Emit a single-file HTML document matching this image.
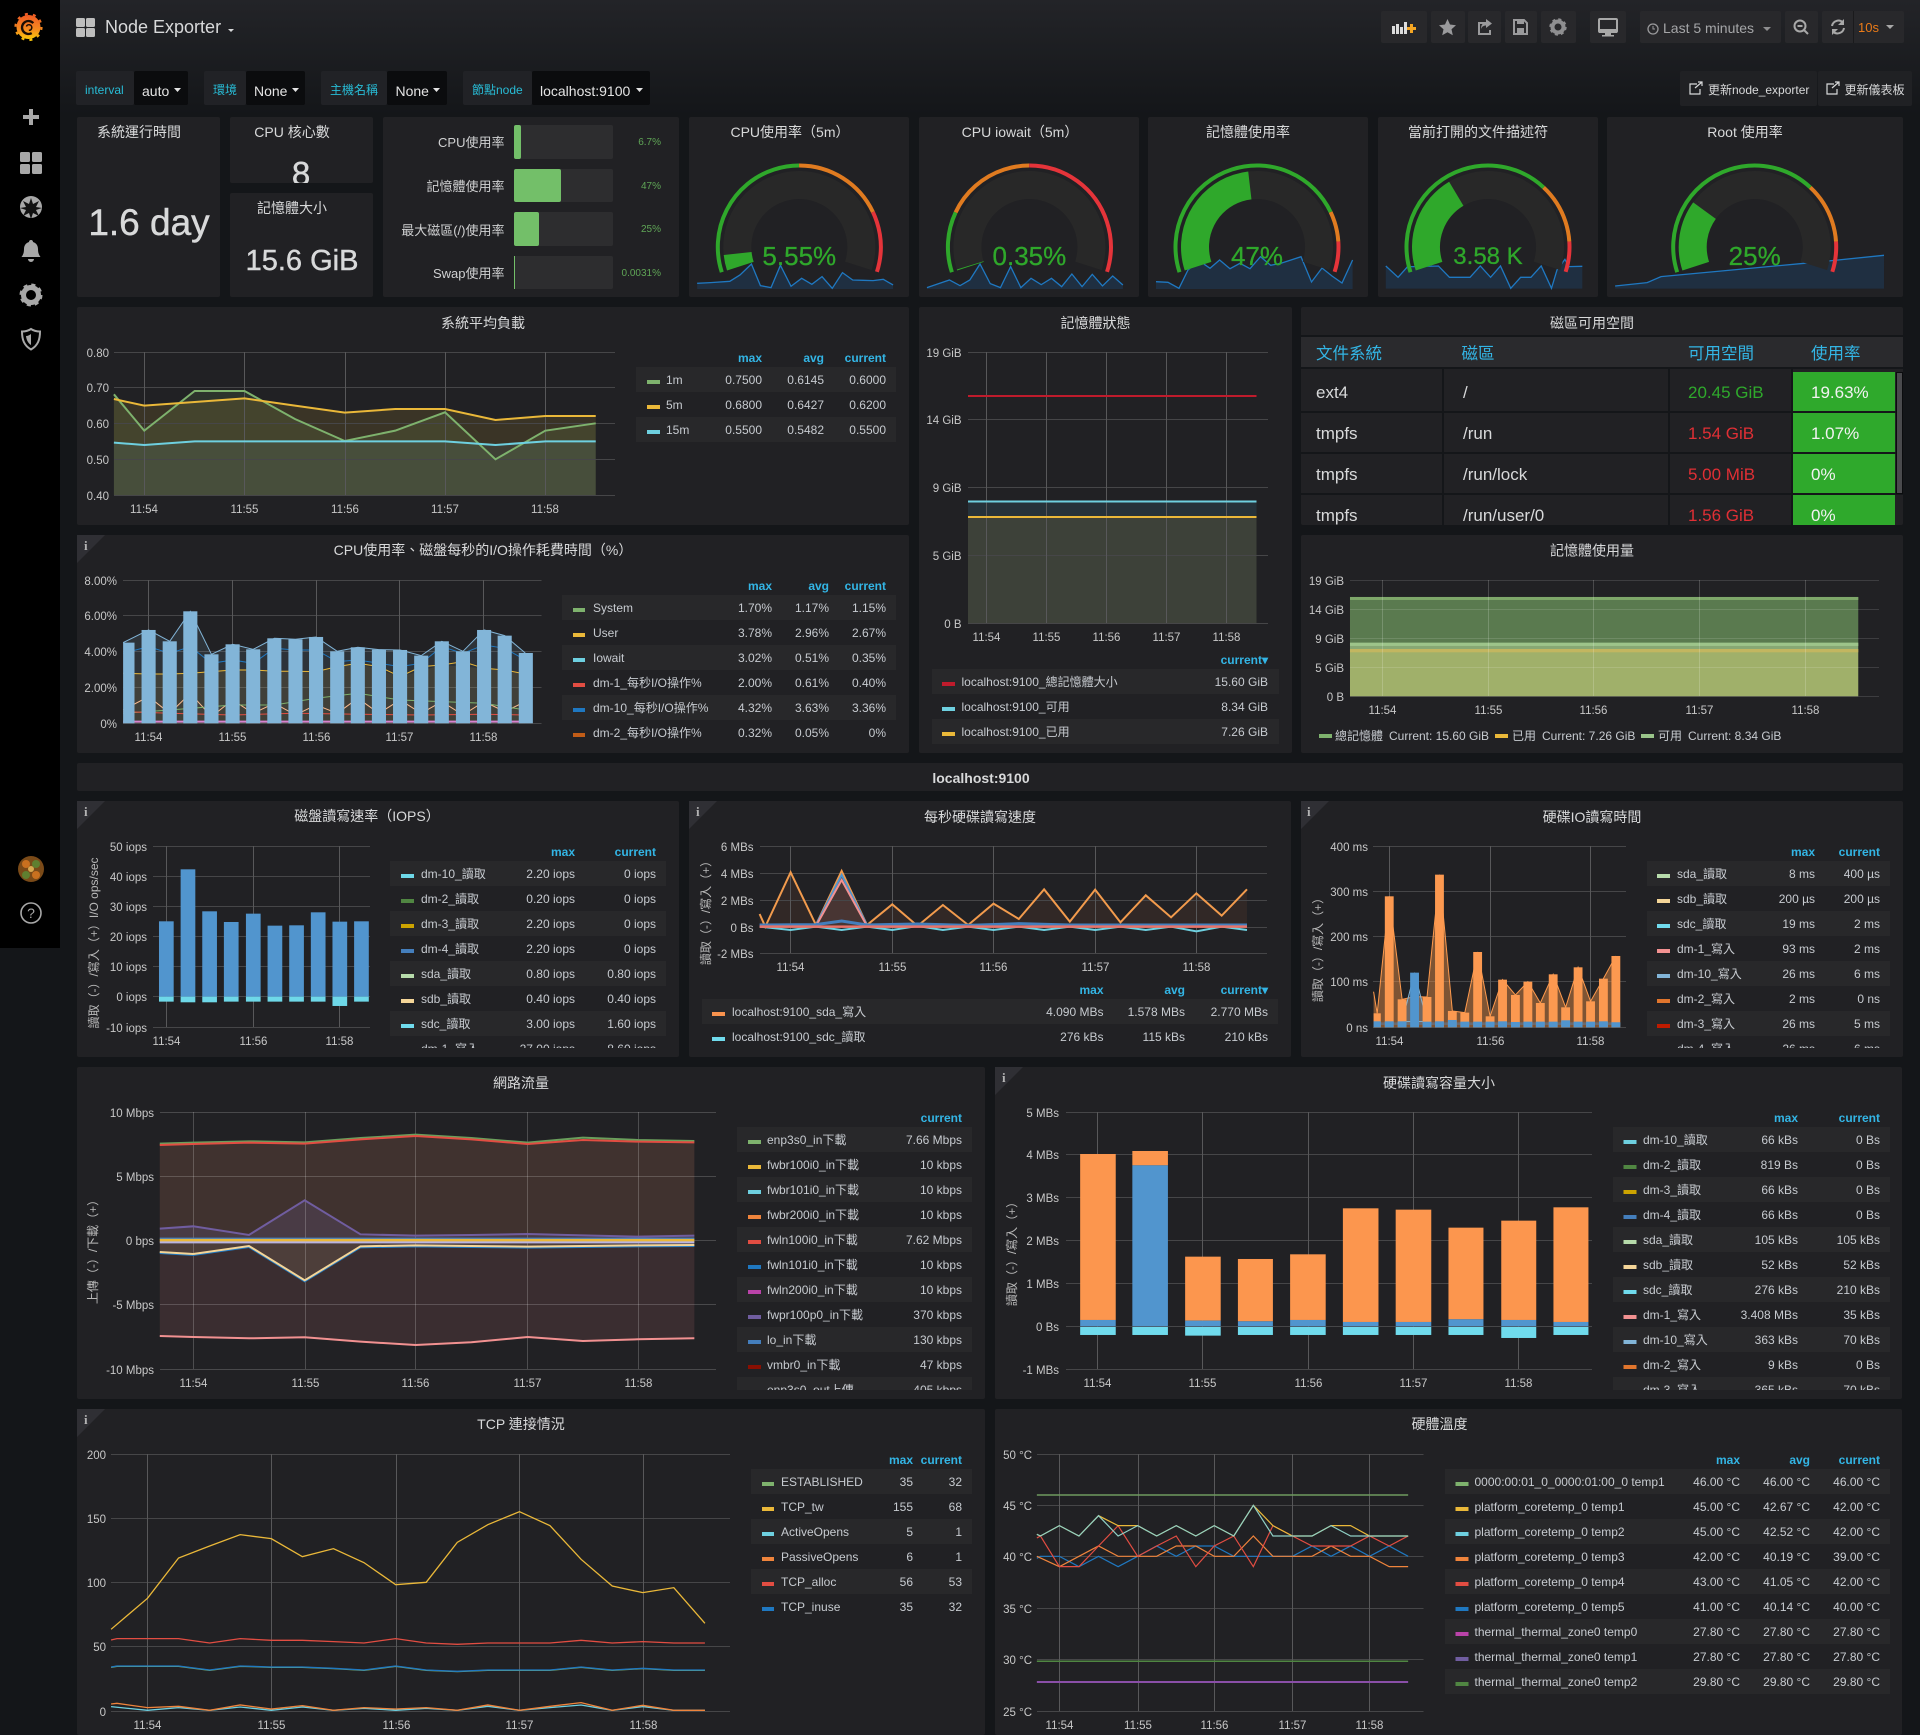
<!DOCTYPE html>
<html lang="zh-Hant"><head><meta charset="utf-8"><title>Node Exporter</title>
<style>
html,body{margin:0;padding:0;background:#141619}
svg{display:block}
text{font-family:"Liberation Sans","Noto Sans CJK TC",sans-serif;fill:#d8d9da;font-size:12px}
.t{font-size:14px;text-anchor:middle}
.a{font-size:11.5px;text-anchor:end;fill:#c8c8c8}
.x{font-size:11.5px;text-anchor:middle;fill:#c8c8c8}
.n{fill:#c7cbd0}
.r{text-anchor:end;fill:#c7cbd0}
.h{text-anchor:end;fill:#33b5e5;font-weight:bold}
.y{text-anchor:middle;fill:#b8b8b8}
.p{fill:#212124}
.st{fill:#28282a}
.g{stroke:#464648;stroke-width:1;fill:none;shape-rendering:crispEdges}
.v{stroke:#58585a;stroke-width:1;fill:none;shape-rendering:crispEdges}
.z polyline,.z path,.z line{vector-effect:non-scaling-stroke;fill:none}
.i{font-family:"Liberation Serif",serif;font-size:13px;font-weight:bold;fill:#b4b4b4}
.tab{font-size:17px}
.th{font-size:16.5px;fill:#33b5e5}
.var{fill:#28bcd6;font-size:12px}
.val{font-size:14px;fill:#e4e4e4}
.btn{fill:#28282b}
.ic{fill:#a8a8a8}
.gv{fill:#2fa82b;font-size:26px;text-anchor:middle;stroke:#2fa82b;stroke-width:.3}
.bl{font-size:13px;text-anchor:end;fill:#d0d1d2}
.bv{font-size:10px;text-anchor:end;fill:#5fa556}
.big{text-anchor:middle;stroke:#d8d9da;stroke-width:.45}
</style></head><body>
<svg xmlns="http://www.w3.org/2000/svg" width="1920" height="1735" viewBox="0 0 1920 1735">
<defs>
<linearGradient id="bg" x1="0" y1="0" x2="0" y2="1"><stop offset="0" stop-color="#232428"/><stop offset="1" stop-color="#141619"/></linearGradient>
<linearGradient id="lg" x1="0" y1="0" x2="0" y2="1"><stop offset="0" stop-color="#ef5b25"/><stop offset=".6" stop-color="#f58a1f"/><stop offset="1" stop-color="#fbc70a"/></linearGradient>
<clipPath id="c8"><rect x="230" y="117" width="143" height="66"/></clipPath>
<clipPath id="cdisk"><rect x="1301" y="307" width="602" height="218"/></clipPath>
<clipPath id="c1"><rect x="380" y="850" width="295" height="198"/></clipPath>
<clipPath id="c2"><rect x="1640" y="850" width="260" height="198"/></clipPath>
<clipPath id="c3"><rect x="730" y="1115" width="250" height="275"/></clipPath>
<clipPath id="c4"><rect x="1605" y="1115" width="295" height="275"/></clipPath>
</defs>
<rect width="1920" height="1735" fill="#141619"/>
<rect width="1920" height="115" fill="url(#bg)"/>

<!-- sidebar -->
<rect width="60" height="948" fill="#000"/>
<circle cx="28.5" cy="27" r="12" fill="url(#lg)"/>
<circle cx="28.5" cy="27" r="13" fill="none" stroke="url(#lg)" stroke-width="2.2" stroke-dasharray="3 5.170"/>
<circle cx="28.5" cy="27.500" r="6.500" fill="none" stroke="#1a0d05" stroke-width="2.300" stroke-dasharray="29 12" transform="rotate(60 28.500 27.500)"/>
<circle cx="29" cy="27.500" r="2.800" fill="none" stroke="#1a0d05" stroke-width="1.500" stroke-dasharray="12 6" transform="rotate(200 29 27.500)"/>
<path class="ic" d="M29 109h4v6h6v4h-6v6h-4v-6h-6v-4h6z"/>
<g class="ic"><rect x="20" y="152" width="10" height="10" rx="1.5"/><rect x="32" y="152" width="10" height="10" rx="1.5"/><rect x="20" y="164" width="10" height="10" rx="1.5"/><rect x="32" y="164" width="10" height="10" rx="1.5"/></g>
<circle cx="31" cy="207" r="11" class="ic"/>
<path fill="#111" d="M31 198l2 6 6-3-3 6 6 1-6 2 3 6-6-3-2 6-2-6-6 3 3-6-6-2 6-1-3-6 6 3z"/>
<path class="ic" d="M31 240c-1.4 0-2 1-2 2-3.5 1-5 4-5 7 0 4-1 6-2.500 8h19c-1.500-2-2.500-4-2.500-8 0-3-1.500-6-5-7 0-1-.6-2-2-2zm-3 19a3 3 0 0 0 6 0z"/>
<circle cx="31" cy="295" r="7.500" fill="none" stroke="#a8a8a8" stroke-width="5"/>
<circle cx="31" cy="295" r="10" fill="none" stroke="#a8a8a8" stroke-width="3" stroke-dasharray="4 3.850"/>
<path d="M31 329c3 2 6 2.500 9 2.500 0 8-2 14-9 18-7-4-9-10-9-18 3 0 6-.5 9-2.500z" fill="none" stroke="#a8a8a8" stroke-width="2"/>
<path class="ic" d="M31 334v11c-3-2-4.500-5-5-9 2 0 3.500-1 5-2z"/>
<circle cx="31" cy="869" r="13" fill="#7a4a18"/>
<circle cx="26" cy="864" r="4" fill="#c9701f"/><circle cx="36" cy="864" r="4" fill="#5f7f30"/><circle cx="26" cy="875" r="4" fill="#5f7f30"/><circle cx="36" cy="875" r="4" fill="#c9701f"/><circle cx="31" cy="869" r="3" fill="#d8a850"/>
<circle cx="31" cy="913" r="10" fill="none" stroke="#a8a8a8" stroke-width="1.600"/>
<text x="31" y="918" style="font-size:14px;text-anchor:middle;fill:#a8a8a8">?</text>

<!-- nav -->
<g fill="#bdbdbd"><rect x="76" y="18" width="9" height="9" rx="1.500"/><rect x="86" y="18" width="9" height="9" rx="1.500"/><rect x="76" y="28" width="9" height="9" rx="1.500"/><rect x="86" y="28" width="9" height="9" rx="1.500"/></g>
<text x="105" y="33" style="font-size:18px">Node Exporter</text>
<path d="M228 29h6l-3 3z" fill="#d8d9da"/>

<g>
<rect class="btn" x="1381" y="11" width="46" height="32" rx="2"/><rect class="btn" x="1431" y="11" width="34" height="32" rx="2"/><rect class="btn" x="1468" y="11" width="33" height="32" rx="2"/><rect class="btn" x="1505" y="11" width="32" height="32" rx="2"/><rect class="btn" x="1541" y="11" width="35" height="32" rx="2"/><rect class="btn" x="1590" y="11" width="36" height="32" rx="2"/><rect class="btn" x="1640" y="11" width="141" height="32" rx="2"/><rect class="btn" x="1785" y="11" width="33" height="32" rx="2"/><rect class="btn" x="1822" y="11" width="82" height="32" rx="2"/>
<rect x="1853" y="11" width="1" height="32" fill="#1a1a1c"/>
</g>
<g fill="#dcdcdc"><rect x="1392" y="26" width="3" height="8"/><rect x="1396" y="24" width="3" height="10"/><rect x="1400" y="27" width="3" height="7"/><rect x="1404" y="22" width="3" height="12"/></g>
<path d="M1410 24h3v3h3v3h-3v3h-3v-3h-3v-3h3z" fill="#f5a623"/>
<path fill="#9a9a9c" d="M1447.500 19l2.500 5.500 6 .7-4.500 4 1.300 6-5.300-3-5.300 3 1.300-6-4.500-4 6-.7z"/>
<path fill="none" stroke="#9a9a9c" stroke-width="2" d="M1486 23h-7v11h11v-4"/><path fill="#9a9a9c" d="M1486 19l6 4.500-6 4.500v-2.500c-2.500 0-4 1-5 3.500 0-4 2-6.500 5-7z"/>
<path fill="none" stroke="#9a9a9c" stroke-width="2" d="M1514 20h10l3 3v11h-13z"/><rect x="1517" y="20" width="7" height="4" fill="#9a9a9c"/><rect x="1517" y="28" width="7" height="6" fill="#9a9a9c"/>
<circle cx="1558" cy="27" r="5.500" fill="none" stroke="#8e8e90" stroke-width="4"/><circle cx="1558" cy="27" r="7.500" fill="none" stroke="#8e8e90" stroke-width="2.400" stroke-dasharray="3 2.890"/>
<rect x="1599" y="19" width="18" height="13" rx="1" fill="none" stroke="#a8a8a8" stroke-width="2"/><path d="M1599 29h18v4h-18zM1605 33h6v2h3v1.500h-12v-1.500h3z" fill="#a8a8a8"/>
<circle cx="1653" cy="29" r="5" fill="none" stroke="#9a9a9c" stroke-width="1.300"/><path d="M1653 26v3h2" fill="none" stroke="#9a9a9c"/>
<text x="1663" y="33" style="font-size:14px;fill:#a5a6a8">Last 5 minutes</text>
<path d="M1763 27h8l-4 4z" fill="#8e8e90"/>
<circle cx="1800" cy="26" r="5.500" fill="none" stroke="#a8a8a8" stroke-width="2"/><path d="M1797.500 26h5M1804 30l4 4" stroke="#a8a8a8" stroke-width="2" fill="none"/>
<path d="M1832 26a6.500 6.500 0 0 1 11-3.500M1844 28a6.500 6.500 0 0 1-11 3.500" fill="none" stroke="#a8a8a8" stroke-width="2"/><path d="M1844 19v6h-6zM1832 35v-6h6z" fill="#a8a8a8"/>
<text x="1858" y="32" style="font-size:13px;fill:#eb7b18">10s</text>
<path d="M1886 25h8l-4 4z" fill="#a8a8a8"/>

<!-- template vars -->
<g>
<rect x="76" y="71" width="58" height="34" rx="2" fill="#212226"/><rect x="134" y="71" width="54" height="34" rx="2" fill="#0b0c0e"/>
<text class="var" x="85" y="94">interval</text><text class="val" x="142" y="96">auto</text><path d="M174 88h7l-3.500 4z" fill="#e4e4e4"/>
<rect x="204" y="71" width="42" height="34" rx="2" fill="#212226"/><rect x="246" y="71" width="59" height="34" rx="2" fill="#0b0c0e"/>
<text class="var" x="213" y="94">環境</text><text class="val" x="254" y="96">None</text><path d="M292 88h7l-3.500 4z" fill="#e4e4e4"/>
<rect x="321" y="71" width="66" height="34" rx="2" fill="#212226"/><rect x="387" y="71" width="60" height="34" rx="2" fill="#0b0c0e"/>
<text class="var" x="330" y="94">主機名稱</text><text class="val" x="395.500" y="96">None</text><path d="M433 88h7l-3.500 4z" fill="#e4e4e4"/>
<rect x="463" y="71" width="69" height="34" rx="2" fill="#212226"/><rect x="532" y="71" width="118" height="34" rx="2" fill="#0b0c0e"/>
<text class="var" x="472" y="94">節點node</text><text class="val" x="540" y="96">localhost:9100</text><path d="M636 88h7l-3.500 4z" fill="#e4e4e4"/>
<rect x="1680" y="71" width="137" height="35" rx="2" fill="#202124"/><rect x="1818" y="71" width="94" height="35" rx="2" fill="#202124"/>
<path d="M1697 84h-7v10h10v-5M1695 88l7-6M1698 82h4v4" fill="none" stroke="#d8d9da" stroke-width="1.200"/>
<text x="1708" y="94" style="font-size:12px">更新node_exporter</text>
<path d="M1834 84h-7v10h10v-5M1832 88l7-6M1835 82h4v4" fill="none" stroke="#d8d9da" stroke-width="1.200"/>
<text x="1844.500" y="94" style="font-size:12px">更新儀表板</text>
</g>

<!-- panels -->
<g class="p">
<rect x="77" y="117" width="143" height="180" rx="2"/><rect x="230" y="117" width="143" height="66" rx="2"/><rect x="230" y="193" width="143" height="104" rx="2"/><rect x="383" y="117" width="296" height="180" rx="2"/>
<rect x="689" y="117" width="220" height="180" rx="2"/><rect x="919" y="117" width="220" height="180" rx="2"/><rect x="1148" y="117" width="220" height="180" rx="2"/><rect x="1378" y="117" width="220" height="180" rx="2"/><rect x="1607" y="117" width="296" height="180" rx="2"/>
<rect x="77" y="307" width="832" height="218" rx="2"/><rect x="77" y="535" width="832" height="218" rx="2"/><rect x="919" y="307" width="373" height="446" rx="2"/><rect x="1301" y="307" width="602" height="218" rx="2"/><rect x="1301" y="535" width="602" height="218" rx="2"/>
<rect x="77" y="763" width="1826" height="28" rx="2"/>
<rect x="77" y="801" width="602" height="256" rx="2"/><rect x="689" y="801" width="602" height="256" rx="2"/><rect x="1301" y="801" width="602" height="256" rx="2"/>
<rect x="77" y="1067" width="908" height="332" rx="2"/><rect x="995" y="1067" width="907" height="332" rx="2"/>
<rect x="77" y="1409" width="908" height="326" rx="2"/><rect x="995" y="1409" width="907" height="326" rx="2"/>
</g>
<!-- info corners -->
<g fill="#2f2f34"><path d="M77 535h28l-28 28z"/><path d="M77 801h28l-28 28z"/><path d="M689 801h28l-28 28z"/><path d="M1301 801h28l-28 28z"/><path d="M995 1067h28l-28 28z"/><path d="M77 1409h28l-28 28z"/></g>
<text class="i" x="84" y="550">i</text><text class="i" x="84" y="816">i</text><text class="i" x="696" y="816">i</text><text class="i" x="1307" y="816">i</text><text class="i" x="1002" y="1082">i</text><text class="i" x="84" y="1424">i</text>

<!-- stats -->
<text class="t" x="139" y="137">系統運行時間</text>
<text class="big" x="149" y="235" style="font-size:37px">1.6 day</text>
<text class="t" x="292" y="137">CPU 核心數</text>
<text class="big" x="301" y="185" clip-path="url(#c8)" style="font-size:33px">8</text>
<text class="t" x="292" y="213">記憶體大小</text>
<text class="big" x="302" y="270" style="font-size:29px">15.6 GiB</text>

<!-- bar gauge -->
<g fill="#2d2d2f"><rect x="514" y="125" width="99" height="34" rx="2"/><rect x="514" y="169" width="99" height="33" rx="2"/><rect x="514" y="212" width="99" height="34" rx="2"/><rect x="514" y="256" width="99" height="33" rx="2"/></g>
<g fill="#73bf69"><rect x="514" y="125" width="7" height="34" rx="2"/><rect x="514" y="169" width="47" height="33" rx="2"/><rect x="514" y="212" width="25" height="34" rx="2"/><rect x="514" y="256" width="1" height="33"/></g>
<text class="bl" x="504.500" y="147">CPU使用率</text><text class="bl" x="504.500" y="191">記憶體使用率</text><text class="bl" x="504.500" y="235">最大磁區(/)使用率</text><text class="bl" x="504.500" y="278">Swap使用率</text>
<text class="bv" x="661" y="145">6.7%</text><text class="bv" x="661" y="189">47%</text><text class="bv" x="661" y="232">25%</text><text class="bv" x="661" y="276">0.0031%</text>

<!-- gauges -->
<text class="t" x="790" y="137">CPU使用率（5m）</text>
<text class="t" x="1020" y="137">CPU iowait（5m）</text>
<text class="t" x="1248" y="137">記憶體使用率</text>
<text class="t" x="1478" y="137">當前打開的文件描述符</text>
<text class="t" x="1745" y="137">Root 使用率</text>
<g class="z">
<g transform="translate(680,110) scale(.4082,.3333)">
<path d="M42 520L75 518 122 514 147 495 175 462 197 527 223 533 246 466 272 529 298 505 323 523 348 500 373 535 398 488 423 510 448 511 473 512 498 508 522 525V537H42Z" style="fill:#1f2f41;stroke:none"/>
<polyline points="42,520 75,518 122,514 147,495 175,462 197,527 223,533 246,466 272,529 298,505 323,523 348,500 373,535 398,488 423,510 448,511 473,512 498,508 522,525" stroke="#1f78c1" stroke-width="1.300"/>
<path d="M605 533L660 510 686 527 710 510 735 462 760 521 785 533 810 470 835 533 860 505 885 524 910 505 935 530 960 492 985 530 1010 493 1035 528 1060 498 1085 525V537H605Z" style="fill:#1f2f41;stroke:none"/>
<polyline points="605,533 660,510 686,527 710,510 735,462 760,521 785,533 810,470 835,533 860,505 885,524 910,505 935,530 960,492 985,530 1010,493 1035,528 1060,498 1085,525" stroke="#1f78c1" stroke-width="1.300"/>
</g>
<path d="M1156 281.700L1168 282.300 1179 288.300 1188 270 1199 260.700 1210 268.300 1219.600 260 1230 268.700 1240 263.300 1250 268.700 1260.500 256.700 1270.700 265.300 1281 263.300 1291 260 1301 256.700 1311.500 282 1322 268 1332 276 1342 283 1352.600 260V289H1156Z" style="fill:#1f2f41;stroke:none"/>
<polyline points="1156,281.700 1168,282.300 1179,288.300 1188,270 1199,260.700 1210,268.300 1219.600,260 1230,268.700 1240,263.300 1250,268.700 1260.500,256.700 1270.700,265.300 1281,263.300 1291,260 1301,256.700 1311.500,282 1322,268 1332,276 1342,283 1352.600,260" stroke="#1f78c1" stroke-width="1.300"/>
<g transform="translate(1300,0) scale(.3954,.3333)">
<path d="M217 798L248 832 272 800 300 800 350 798 378 832 430 832 456 798 482 832 507 798 533 865 558 832 584 832 610 798 636 865 650 810 670 778 680 800 714 799V866H217Z" style="fill:#1f2f41;stroke:none"/>
<polyline points="217,798 248,832 272,800 300,800 350,798 378,832 430,832 456,798 482,832 507,798 533,865 558,832 584,832 610,798 636,865 650,810 670,778 680,800 714,799" stroke="#1f78c1" stroke-width="1.300"/>
<path d="M797 858L878 848 913 830 1275 790 1345 782 1477 766V866H797Z" style="fill:#1f2f41;stroke:none"/>
<polyline points="797,858 878,848 913,830 1275,790 1345,782 1477,766" stroke="#1f78c1" stroke-width="1.300"/>
</g>
</g>
<!-- gauge 1 cpu -->
<g fill="none" transform="rotate(162 799.300 247)">
<circle cx="799.300" cy="247" r="62" stroke="#282828" stroke-width="28" pathLength="360" stroke-dasharray="216 360"/>
<circle cx="799.300" cy="247" r="62" stroke="#2fa82b" stroke-width="28" pathLength="360" stroke-dasharray="12 360"/>
<circle cx="799.300" cy="247" r="81.500" stroke="#2fa82b" stroke-width="4" pathLength="360" stroke-dasharray="108 360"/>
<circle cx="799.300" cy="247" r="81.500" stroke="#e07b20" stroke-width="4" pathLength="360" stroke-dasharray="64.800 360" stroke-dashoffset="-108"/>
<circle cx="799.300" cy="247" r="81.500" stroke="#e5343a" stroke-width="4" pathLength="360" stroke-dasharray="43.200 360" stroke-dashoffset="-172.800"/>
</g>
<text class="gv" x="799.300" y="265">5.55%</text>
<!-- gauge 2 iowait -->
<g fill="none" transform="rotate(162 1029.400 247)">
<circle cx="1029.400" cy="247" r="62" stroke="#282828" stroke-width="28" pathLength="360" stroke-dasharray="216 360"/>
<circle cx="1029.400" cy="247" r="62" stroke="#2fa82b" stroke-width="28" pathLength="360" stroke-dasharray="0.800 360"/>
<circle cx="1029.400" cy="247" r="81.500" stroke="#2fa82b" stroke-width="4" pathLength="360" stroke-dasharray="43.200 360"/>
<circle cx="1029.400" cy="247" r="81.500" stroke="#e07b20" stroke-width="4" pathLength="360" stroke-dasharray="64.800 360" stroke-dashoffset="-43.200"/>
<circle cx="1029.400" cy="247" r="81.500" stroke="#e5343a" stroke-width="4" pathLength="360" stroke-dasharray="108 360" stroke-dashoffset="-108"/>
</g>
<text class="gv" x="1029.400" y="265">0.35%</text>
<!-- gauge 3 mem -->
<g fill="none" transform="rotate(162 1257 247)">
<circle cx="1257" cy="247" r="62" stroke="#282828" stroke-width="28" pathLength="360" stroke-dasharray="216 360"/>
<circle cx="1257" cy="247" r="62" stroke="#2fa82b" stroke-width="28" pathLength="360" stroke-dasharray="101.500 360"/>
<circle cx="1257" cy="247" r="81.500" stroke="#2fa82b" stroke-width="4" pathLength="360" stroke-dasharray="172.800 360"/>
<circle cx="1257" cy="247" r="81.500" stroke="#e07b20" stroke-width="4" pathLength="360" stroke-dasharray="21.600 360" stroke-dashoffset="-172.800"/>
<circle cx="1257" cy="247" r="81.500" stroke="#e5343a" stroke-width="4" pathLength="360" stroke-dasharray="21.600 360" stroke-dashoffset="-194.400"/>
</g>
<text class="gv" x="1257" y="265">47%</text>
<!-- gauge 4 fd -->
<g fill="none" transform="rotate(162 1488 247)">
<circle cx="1488" cy="247" r="62" stroke="#282828" stroke-width="28" pathLength="360" stroke-dasharray="216 360"/>
<circle cx="1488" cy="247" r="62" stroke="#2fa82b" stroke-width="28" pathLength="360" stroke-dasharray="77.300 360"/>
<circle cx="1488" cy="247" r="81.500" stroke="#2fa82b" stroke-width="4" pathLength="360" stroke-dasharray="151.200 360"/>
<circle cx="1488" cy="247" r="81.500" stroke="#e07b20" stroke-width="4" pathLength="360" stroke-dasharray="43.200 360" stroke-dashoffset="-151.200"/>
<circle cx="1488" cy="247" r="81.500" stroke="#e5343a" stroke-width="4" pathLength="360" stroke-dasharray="21.600 360" stroke-dashoffset="-194.400"/>
</g>
<text class="gv" x="1488" y="264" style="font-size:24px">3.58 K</text>
<!-- gauge 5 root -->
<g fill="none" transform="rotate(162 1754.700 247)">
<circle cx="1754.700" cy="247" r="62" stroke="#282828" stroke-width="28" pathLength="360" stroke-dasharray="216 360"/>
<circle cx="1754.700" cy="247" r="62" stroke="#2fa82b" stroke-width="28" pathLength="360" stroke-dasharray="54 360"/>
<circle cx="1754.700" cy="247" r="81.500" stroke="#2fa82b" stroke-width="4" pathLength="360" stroke-dasharray="151.200 360"/>
<circle cx="1754.700" cy="247" r="81.500" stroke="#e07b20" stroke-width="4" pathLength="360" stroke-dasharray="43.200 360" stroke-dashoffset="-151.200"/>
<circle cx="1754.700" cy="247" r="81.500" stroke="#e5343a" stroke-width="4" pathLength="360" stroke-dasharray="21.600 360" stroke-dashoffset="-194.400"/>
</g>
<text class="gv" x="1754.700" y="265">25%</text>

<!-- system load -->
<text class="t" x="483" y="328">系統平均負載</text>
<g class="z" transform="translate(70,300) scale(.542,.3333)">
<path d="M81 283L137 392 230 273 322 273 415 357 507 423 600 392 692 337 785 478 877 392 970 370V586H81Z" style="fill:#7eb26d;fill-opacity:.12"/>
<path d="M81 297L137 317 230 306 322 295 415 317 507 338 600 327 692 327 785 360 877 348 970 348V586H81Z" style="fill:#eab839;fill-opacity:.13"/>
<path d="M81 428L137 435 230 424 322 424 415 424 507 424 600 424 692 424 785 435 877 424 970 424V586H81Z" style="fill:#6ed0e0;fill-opacity:.08"/>
</g>
<path class="g" d="M114 352.500H615M114 387.500H615M114 423.500H615M114 459.500H615M114 495.500H615"/>
<path class="v" d="M144.500 352V495M244.500 352V495M345.500 352V495M445.500 352V495M545.500 352V495"/>
<g class="z" transform="translate(70,300) scale(.542,.3333)">
<polyline points="81,283 137,392 230,273 322,273 415,357 507,423 600,392 692,337 785,478 877,392 970,370" stroke="#7eb26d" stroke-width="2"/>
<polyline points="81,297 137,317 230,306 322,295 415,317 507,338 600,327 692,327 785,360 877,348 970,348" stroke="#eab839" stroke-width="2"/>
<polyline points="81,428 137,435 230,424 322,424 415,424 507,424 600,424 692,424 785,435 877,424 970,424" stroke="#6ed0e0" stroke-width="2"/>
</g>
<text class="a" x="109" y="357">0.80</text><text class="a" x="109" y="392">0.70</text><text class="a" x="109" y="428">0.60</text><text class="a" x="109" y="464">0.50</text><text class="a" x="109" y="500">0.40</text>
<text class="x" x="144" y="513">11:54</text><text class="x" x="244.500" y="513">11:55</text><text class="x" x="345" y="513">11:56</text><text class="x" x="445" y="513">11:57</text><text class="x" x="545" y="513">11:58</text>
<text class="h" x="762" y="362">max</text><text class="h" x="824" y="362">avg</text><text class="h" x="886" y="362">current</text>
<rect class="st" x="636" y="367" width="260" height="25"/><rect class="st" x="636" y="417" width="260" height="25"/>
<rect x="647" y="380" width="13" height="4" fill="#7eb26d"/><text class="n" x="666" y="384">1m</text><text class="r" x="762" y="384">0.7500</text><text class="r" x="824" y="384">0.6145</text><text class="r" x="886" y="384">0.6000</text>
<rect x="647" y="405" width="13" height="4" fill="#eab839"/><text class="n" x="666" y="409">5m</text><text class="r" x="762" y="409">0.6800</text><text class="r" x="824" y="409">0.6427</text><text class="r" x="886" y="409">0.6200</text>
<rect x="647" y="430" width="13" height="4" fill="#6ed0e0"/><text class="n" x="666" y="434">15m</text><text class="r" x="762" y="434">0.5500</text><text class="r" x="824" y="434">0.5482</text><text class="r" x="886" y="434">0.5500</text>

<!-- CPU IO -->
<text class="t" x="483" y="555">CPU使用率、磁盤每秒的I/O操作耗費時間（%）</text>
<path class="g" d="M123 580.500H541.500M123 615.500H541.500M123 651.500H541.500M123 687.500H541.500M123 723.500H541.500"/>
<path class="v" d="M148.500 580V723M232.500 580V723M316.500 580V723M399.500 580V723M483.500 580V723"/>
<g class="z" transform="translate(70,300) scale(.542,.3333)">
<path d="M98 1028L145 990 184 1024 222 934 261 1063 300 1033 338 1048 377 1015 416 1018 454 1011 493 1054 531 1042 570 1049 609 1050 648 1067 686 1024 725 1054 764 990 802 1007 840 1059V1270H98Z" style="fill:#82b5d8;fill-opacity:.12"/>
<path d="M98 1120L184 1122 222 1120 300 1110 377 1114 454 1115 531 1090 609 1130 686 1095 764 1105 840 1122V1270H98Z" style="fill:#eab839;fill-opacity:.1"/>
<polyline points="98,1028 145,990 184,1024 222,934 261,1063 300,1033 338,1048 377,1015 416,1018 454,1011 493,1054 531,1042 570,1049 609,1050 648,1067 686,1024 725,1054 764,990 802,1007 840,1059" stroke="#82b5d8" stroke-width="1"/>
<polyline points="98,1060 145,1040 184,1060 222,1040 261,1090 300,1080 338,1090 377,1045 416,1050 454,1050 493,1085 531,1080 570,1090 609,1100 648,1090 686,1040 725,1060 764,1035 802,1045 840,1080" stroke="#1f78c1" stroke-width="1"/>
<polyline points="98,1120 145,1122 184,1122 222,1120 261,1115 300,1110 338,1110 377,1114 416,1114 454,1115 493,1100 531,1090 570,1100 609,1130 648,1100 686,1095 725,1085 764,1105 802,1110 840,1122" stroke="#eab839" stroke-width="1"/>
<polyline points="98,1230 145,1190 184,1240 222,1180 261,1250 300,1200 338,1240 377,1210 416,1245 454,1215 493,1240 531,1195 570,1240 609,1200 648,1240 686,1205 725,1245 764,1205 802,1235 840,1205" stroke="#f9ba8f" stroke-width="1"/>
<polyline points="98,1240 184,1230 300,1215 377,1215 454,1195 531,1180 609,1200 686,1205 764,1210 840,1230" stroke="#7eb26d" stroke-width="1"/>
<polyline points="98,1235 184,1240 300,1245 416,1240 531,1243 648,1245 764,1243 840,1245" stroke="#e24d42" stroke-width="1"/>
<polyline points="98,1265 300,1265 531,1265 840,1265" stroke="#d683ce" stroke-width="2"/>
<g fill="#82b5d8"><rect x="98" y="1028" width="21" height="242"/><rect x="132" y="990" width="26" height="280"/><rect x="171" y="1024" width="26" height="246"/><rect x="209" y="934" width="26" height="336"/><rect x="248" y="1063" width="26" height="207"/><rect x="287" y="1033" width="26" height="237"/><rect x="325" y="1048" width="26" height="222"/><rect x="364" y="1015" width="26" height="255"/><rect x="403" y="1018" width="26" height="252"/><rect x="441" y="1011" width="26" height="259"/><rect x="480" y="1054" width="26" height="216"/><rect x="518" y="1042" width="26" height="228"/><rect x="557" y="1049" width="26" height="221"/><rect x="596" y="1050" width="26" height="220"/><rect x="635" y="1067" width="26" height="203"/><rect x="673" y="1024" width="26" height="246"/><rect x="712" y="1054" width="26" height="216"/><rect x="751" y="990" width="26" height="280"/><rect x="789" y="1007" width="26" height="263"/><rect x="828" y="1059" width="26" height="211"/></g>
</g>
<text class="a" x="117" y="585">8.00%</text><text class="a" x="117" y="620">6.00%</text><text class="a" x="117" y="656">4.00%</text><text class="a" x="117" y="692">2.00%</text><text class="a" x="117" y="728">0%</text>
<text class="x" x="148.500" y="741">11:54</text><text class="x" x="232.500" y="741">11:55</text><text class="x" x="316.500" y="741">11:56</text><text class="x" x="399.500" y="741">11:57</text><text class="x" x="483.500" y="741">11:58</text>
<text class="h" x="772" y="590">max</text><text class="h" x="829" y="590">avg</text><text class="h" x="886" y="590">current</text>
<rect class="st" x="562" y="595" width="334" height="25"/><rect class="st" x="562" y="645" width="334" height="25"/><rect class="st" x="562" y="695" width="334" height="25"/>
<rect x="573" y="608" width="12" height="4" fill="#7eb26d"/><text class="n" x="593" y="612">System</text><text class="r" x="772" y="612">1.70%</text><text class="r" x="829" y="612">1.17%</text><text class="r" x="886" y="612">1.15%</text>
<rect x="573" y="633" width="12" height="4" fill="#eab839"/><text class="n" x="593" y="637">User</text><text class="r" x="772" y="637">3.78%</text><text class="r" x="829" y="637">2.96%</text><text class="r" x="886" y="637">2.67%</text>
<rect x="573" y="658" width="12" height="4" fill="#6ed0e0"/><text class="n" x="593" y="662">Iowait</text><text class="r" x="772" y="662">3.02%</text><text class="r" x="829" y="662">0.51%</text><text class="r" x="886" y="662">0.35%</text>
<rect x="573" y="683" width="12" height="4" fill="#e24d42"/><text class="n" x="593" y="687">dm-1_每秒I/O操作%</text><text class="r" x="772" y="687">2.00%</text><text class="r" x="829" y="687">0.61%</text><text class="r" x="886" y="687">0.40%</text>
<rect x="573" y="708" width="12" height="4" fill="#1f78c1"/><text class="n" x="593" y="712">dm-10_每秒I/O操作%</text><text class="r" x="772" y="712">4.32%</text><text class="r" x="829" y="712">3.63%</text><text class="r" x="886" y="712">3.36%</text>
<rect x="573" y="733" width="12" height="4" fill="#c15c17"/><text class="n" x="593" y="737">dm-2_每秒I/O操作%</text><text class="r" x="772" y="737">0.32%</text><text class="r" x="829" y="737">0.05%</text><text class="r" x="886" y="737">0%</text>

<!-- mem status -->
<text class="t" x="1095.500" y="328">記憶體狀態</text>
<rect x="968" y="501.500" width="288.500" height="15.500" fill="#26323a"/>
<rect x="968" y="517" width="288.500" height="106" fill="#3d4139"/>
<path class="g" d="M968 352.500H1268M968 419.500H1268M968 487.500H1268M968 555.500H1268M968 623.500H1268"/>
<path class="v" d="M986.500 352V623M1046.500 352V623M1106.500 352V623M1166.500 352V623M1226.500 352V623"/>
<path d="M968 396H1256.500" stroke="#bf1b2c" stroke-width="2"/>
<path d="M968 501.500H1256.500" stroke="#6ed0e0" stroke-width="2"/>
<path d="M968 517H1256.500" stroke="#eab839" stroke-width="2"/>
<text class="a" x="961.500" y="357">19 GiB</text><text class="a" x="961.500" y="424">14 GiB</text><text class="a" x="961.500" y="492">9 GiB</text><text class="a" x="961.500" y="560">5 GiB</text><text class="a" x="961.500" y="628">0 B</text>
<text class="x" x="986.500" y="641">11:54</text><text class="x" x="1046.500" y="641">11:55</text><text class="x" x="1106.500" y="641">11:56</text><text class="x" x="1166.500" y="641">11:57</text><text class="x" x="1226.500" y="641">11:58</text>
<text class="h" x="1268" y="664">current▾</text>
<rect class="st" x="932" y="669" width="347" height="25"/><rect class="st" x="932" y="719" width="347" height="25"/>
<rect x="942" y="682" width="13" height="4" fill="#bf1b2c"/><text class="n" x="961.500" y="686">localhost:9100_總記憶體大小</text><text class="r" x="1268" y="686">15.60 GiB</text>
<rect x="942" y="707" width="13" height="4" fill="#6ed0e0"/><text class="n" x="961.500" y="711">localhost:9100_可用</text><text class="r" x="1268" y="711">8.34 GiB</text>
<rect x="942" y="732" width="13" height="4" fill="#eab839"/><text class="n" x="961.500" y="736">localhost:9100_已用</text><text class="r" x="1268" y="736">7.26 GiB</text>

<!-- disk table -->
<text class="t" x="1592" y="328">磁區可用空間</text>
<rect x="1301" y="335" width="602" height="2" fill="#141619"/>
<rect x="1301" y="337" width="602" height="30" fill="#2a2a2d"/>
<rect x="1301" y="367" width="602" height="2" fill="#141619"/>
<text class="th" x="1316" y="359">文件系統</text><text class="th" x="1461.500" y="359">磁區</text><text class="th" x="1688" y="359">可用空間</text><text class="th" x="1811" y="359">使用率</text>
<g clip-path="url(#cdisk)">
<g fill="#141619"><rect x="1301" y="411" width="602" height="2"/><rect x="1301" y="452" width="602" height="2"/><rect x="1301" y="493" width="602" height="2"/><rect x="1442" y="369" width="2" height="160"/><rect x="1668" y="369" width="2" height="160"/><rect x="1791" y="369" width="2" height="160"/></g>
<g fill="#2fa92c"><rect x="1793" y="372" width="102" height="39"/><rect x="1793" y="413" width="102" height="39"/><rect x="1793" y="454" width="102" height="39"/><rect x="1793" y="495" width="102" height="30"/></g>
<rect x="1896" y="372" width="7" height="122" fill="#0b0c0e"/><rect x="1897" y="373" width="5" height="120" fill="#4a4a4d"/>
<text class="tab" x="1316" y="398">ext4</text><text class="tab" x="1463" y="398">/</text><text class="tab" x="1688" y="398" style="fill:#2fa92c">20.45 GiB</text><text class="tab" x="1811" y="398" style="fill:#f2f2f2">19.63%</text>
<text class="tab" x="1316" y="439">tmpfs</text><text class="tab" x="1463" y="439">/run</text><text class="tab" x="1688" y="439" style="fill:#e02f35">1.54 GiB</text><text class="tab" x="1811" y="439" style="fill:#f2f2f2">1.07%</text>
<text class="tab" x="1316" y="480">tmpfs</text><text class="tab" x="1463" y="480">/run/lock</text><text class="tab" x="1688" y="480" style="fill:#e02f35">5.00 MiB</text><text class="tab" x="1811" y="480" style="fill:#f2f2f2">0%</text>
<text class="tab" x="1316" y="521">tmpfs</text><text class="tab" x="1463" y="521">/run/user/0</text><text class="tab" x="1688" y="521" style="fill:#e02f35">1.56 GiB</text><text class="tab" x="1811" y="521" style="fill:#f2f2f2">0%</text>
</g>

<!-- mem usage -->
<text class="t" x="1592" y="555.500">記憶體使用量</text>
<g transform="translate(910,300) scale(.6442,.3333)">
<rect x="683" y="891" width="789" height="139" fill="#5a7a4f"/>
<rect x="683" y="1030" width="789" height="20" fill="#87a874"/>
<rect x="683" y="1050" width="789" height="139" fill="#a0b06a"/>
<rect x="683" y="891" width="789" height="9" fill="#7ea76a"/>
<rect x="683" y="1028" width="789" height="10" fill="#9dc48a"/>
<rect x="683" y="1047" width="789" height="10" fill="#c2b660"/>
</g>
<path d="M1350 580.500H1879M1350 609.500H1879M1350 638.500H1879M1350 667.500H1879M1350 696.500H1879" fill="none" stroke="#fff" stroke-opacity=".13" shape-rendering="crispEdges"/>
<path d="M1382.500 580V696M1488.500 580V696M1593.500 580V696M1699.500 580V696M1805.500 580V696" fill="none" stroke="#fff" stroke-opacity=".18" shape-rendering="crispEdges"/>
<text class="a" x="1344" y="585">19 GiB</text><text class="a" x="1344" y="614">14 GiB</text><text class="a" x="1344" y="643">9 GiB</text><text class="a" x="1344" y="672">5 GiB</text><text class="a" x="1344" y="701">0 B</text>
<text class="x" x="1382.500" y="714">11:54</text><text class="x" x="1488.500" y="714">11:55</text><text class="x" x="1593.500" y="714">11:56</text><text class="x" x="1699.500" y="714">11:57</text><text class="x" x="1805.500" y="714">11:58</text>
<rect x="1319" y="734" width="13" height="4" fill="#7eb26d"/><text class="n" x="1335" y="740">總記憶體</text><text class="n" x="1389" y="740">Current: 15.60 GiB</text>
<rect x="1495" y="734" width="13" height="4" fill="#eab839"/><text class="n" x="1512" y="740">已用</text><text class="n" x="1542" y="740">Current: 7.26 GiB</text>
<rect x="1641" y="734" width="13" height="4" fill="#9ac48a"/><text class="n" x="1658" y="740">可用</text><text class="n" x="1688" y="740">Current: 8.34 GiB</text>

<!-- section -->
<text x="981" y="783" style="font-size:14px;font-weight:bold;text-anchor:middle">localhost:9100</text>

<!-- IOPS -->
<text class="t" x="367" y="821">磁盤讀寫速率（IOPS）</text>
<path class="g" d="M153 846.500H370M153 876.500H370M153 906.500H370M153 936.500H370M153 966.500H370M153 996.500H370M153 1027.500H370"/>
<path class="v" d="M166.500 846V1027M253.500 846V1027M339.500 846V1027"/>
<g transform="translate(70,760) scale(.4082,.3333)">
<g fill="#5195ce"><rect x="218" y="484" width="36" height="226"/><rect x="271" y="328" width="36" height="382"/><rect x="324" y="454" width="36" height="256"/><rect x="377" y="486" width="36" height="224"/><rect x="431" y="461" width="36" height="249"/><rect x="484" y="497" width="36" height="213"/><rect x="537" y="496" width="36" height="214"/><rect x="590" y="457" width="36" height="253"/><rect x="643" y="485" width="36" height="225"/><rect x="696" y="484" width="36" height="226"/></g>
<g fill="#6ed8e8"><rect x="218" y="710" width="36" height="15"/><rect x="271" y="710" width="36" height="17"/><rect x="324" y="710" width="36" height="17"/><rect x="377" y="710" width="36" height="15"/><rect x="431" y="710" width="36" height="15"/><rect x="484" y="710" width="36" height="15"/><rect x="537" y="710" width="36" height="15"/><rect x="590" y="710" width="36" height="15"/><rect x="643" y="710" width="36" height="28"/><rect x="696" y="710" width="36" height="15"/></g>
</g>
<text class="a" x="147" y="851">50 iops</text><text class="a" x="147" y="881">40 iops</text><text class="a" x="147" y="911">30 iops</text><text class="a" x="147" y="941">20 iops</text><text class="a" x="147" y="971">10 iops</text><text class="a" x="147" y="1001">0 iops</text><text class="a" x="147" y="1032">-10 iops</text>
<text class="x" x="166.500" y="1045">11:54</text><text class="x" x="253.500" y="1045">11:56</text><text class="x" x="339.500" y="1045">11:58</text>
<text class="y" transform="translate(98,943) rotate(-90)">讀取（-）/寫入（+）I/O ops/sec</text>
<text class="h" x="575" y="856">max</text><text class="h" x="656" y="856">current</text>
<g clip-path="url(#c1)">
<rect class="st" x="390" y="861" width="276" height="25"/><rect class="st" x="390" y="911" width="276" height="25"/><rect class="st" x="390" y="961" width="276" height="25"/><rect class="st" x="390" y="1011" width="276" height="25"/>
<rect x="401" y="874" width="13" height="4" fill="#6ed8e8"/><text class="n" x="421" y="878">dm-10_讀取</text><text class="r" x="575" y="878">2.20 iops</text><text class="r" x="656" y="878">0 iops</text>
<rect x="401" y="899" width="13" height="4" fill="#508642"/><text class="n" x="421" y="903">dm-2_讀取</text><text class="r" x="575" y="903">0.20 iops</text><text class="r" x="656" y="903">0 iops</text>
<rect x="401" y="924" width="13" height="4" fill="#cca300"/><text class="n" x="421" y="928">dm-3_讀取</text><text class="r" x="575" y="928">2.20 iops</text><text class="r" x="656" y="928">0 iops</text>
<rect x="401" y="949" width="13" height="4" fill="#447ebc"/><text class="n" x="421" y="953">dm-4_讀取</text><text class="r" x="575" y="953">2.20 iops</text><text class="r" x="656" y="953">0 iops</text>
<rect x="401" y="974" width="13" height="4" fill="#b7dbab"/><text class="n" x="421" y="978">sda_讀取</text><text class="r" x="575" y="978">0.80 iops</text><text class="r" x="656" y="978">0.80 iops</text>
<rect x="401" y="999" width="13" height="4" fill="#f4d598"/><text class="n" x="421" y="1003">sdb_讀取</text><text class="r" x="575" y="1003">0.40 iops</text><text class="r" x="656" y="1003">0.40 iops</text>
<rect x="401" y="1024" width="13" height="4" fill="#70dbed"/><text class="n" x="421" y="1028">sdc_讀取</text><text class="r" x="575" y="1028">3.00 iops</text><text class="r" x="656" y="1028">1.60 iops</text>
<text class="n" x="421" y="1053">dm-1_寫入</text><text class="r" x="575" y="1053">27.00 iops</text><text class="r" x="656" y="1053">8.60 iops</text>
</g>

<!-- speed -->
<text class="t" x="980" y="822">每秒硬碟讀寫速度</text>
<g class="z" transform="translate(680,790) scale(.4082,.3333)">
<path d="M195 372L209 410 271 247 333 405 396 243 458 405 520 343 582 408 644 345 706 405 768 341 830 387 892 298 955 395 1017 299 1079 397 1141 316 1203 382 1265 310 1327 377 1389 298V410H195Z" style="fill:#ef843c;fill-opacity:.08"/>
<path d="M333 405L396 270 458 405Z" style="fill:#f29191;fill-opacity:.12"/>
</g>
<path class="g" d="M760 846.500H1267M760 873.500H1267M760 900.500H1267M760 927.500H1267M760 953.500H1267"/>
<path class="v" d="M790.500 846V953M892.500 846V953M993.500 846V953M1095.500 846V953M1196.500 846V953"/>
<g class="z" transform="translate(680,790) scale(.4082,.3333)">
<polyline points="195,410 271,420 333,410 396,420 458,410 520,420 582,408 644,420 706,410 768,420 830,410 892,420 955,410 1017,420 1079,410 1141,420 1203,410 1265,424 1327,410 1389,420" stroke="#6ed0e0" stroke-width="2"/>
<polyline points="195,372 209,410 271,247 333,405 396,243 458,405 520,343 582,408 644,345 706,405 768,341 830,387 892,298 955,395 1017,299 1079,397 1141,316 1203,382 1265,310 1327,377 1389,298" stroke="#f29b4d" stroke-width="2"/>
<polyline points="333,405 396,255 458,405" stroke="#5195ce" stroke-width="2"/>
<polyline points="333,408 396,270 458,408" stroke="#f29191" stroke-width="2"/>
<polyline points="195,405 333,404 396,393 458,405 582,402 706,406 830,401 955,405 1389,405" stroke="#447ebc" stroke-width="3"/>
<polyline points="195,410 1389,410" stroke="#e8736a" stroke-width="2.500"/>
</g>
<text class="a" x="753.500" y="851">6 MBs</text><text class="a" x="753.500" y="878">4 MBs</text><text class="a" x="753.500" y="905">2 MBs</text><text class="a" x="753.500" y="932">0 Bs</text><text class="a" x="753.500" y="958">-2 MBs</text>
<text class="x" x="790.500" y="971">11:54</text><text class="x" x="892.500" y="971">11:55</text><text class="x" x="993.500" y="971">11:56</text><text class="x" x="1095.500" y="971">11:57</text><text class="x" x="1196.500" y="971">11:58</text>
<text class="y" transform="translate(710,910) rotate(-90)">讀取（-）/寫入（+）</text>
<text class="h" x="1103.500" y="994">max</text><text class="h" x="1185" y="994">avg</text><text class="h" x="1268" y="994">current▾</text>
<rect class="st" x="702" y="999" width="576" height="25"/>
<rect x="712" y="1012" width="13" height="4" fill="#f9934e"/><text class="n" x="732" y="1016">localhost:9100_sda_寫入</text><text class="r" x="1103.500" y="1016">4.090 MBs</text><text class="r" x="1185" y="1016">1.578 MBs</text><text class="r" x="1268" y="1016">2.770 MBs</text>
<rect x="712" y="1037" width="13" height="4" fill="#70dbed"/><text class="n" x="732" y="1041">localhost:9100_sdc_讀取</text><text class="r" x="1103.500" y="1041">276 kBs</text><text class="r" x="1185" y="1041">115 kBs</text><text class="r" x="1268" y="1041">210 kBs</text>

<!-- IO time -->
<text class="t" x="1592" y="822">硬碟IO讀寫時間</text>
<path class="g" d="M1373 846.500H1626M1373 891.500H1626M1373 936.500H1626M1373 981.500H1626M1373 1027.500H1626"/>
<path class="v" d="M1389.500 846V1027M1490.500 846V1027M1590.500 846V1027"/>
<g class="z" transform="translate(1290,790) scale(.4018,.3333)">
<path d="M208 605L217 670 247 319 279 628 310 620 341 621 372 254 404 663 435 668 467 486 498 679 529 569 561 615 592 575 623 639 655 553 686 652 717 532 748 634 780 566 811 498V712H208Z" style="fill:#ff9a4d;fill-opacity:.42"/>
<polyline points="208,605 217,670 247,319 279,628 310,620 341,621 372,254 404,663 435,668 467,486 498,679 529,569 561,615 592,575 623,639 655,553 686,652 717,532 748,634 780,566 811,498" stroke="#ff9a4d" stroke-width="1"/>
<path d="M279 695L310 548 341 695Z" style="fill:#5195ce;fill-opacity:.3;stroke:#82b5d8;stroke-width:1"/>
<g fill="#fc9950"><rect x="208" y="670" width="18" height="42"/><rect x="236" y="319" width="22" height="393"/><rect x="268" y="628" width="22" height="84"/><rect x="330" y="621" width="22" height="91"/><rect x="361" y="254" width="22" height="458"/><rect x="393" y="663" width="22" height="49"/><rect x="424" y="668" width="22" height="44"/><rect x="456" y="486" width="22" height="226"/><rect x="487" y="679" width="22" height="33"/><rect x="518" y="569" width="22" height="143"/><rect x="550" y="615" width="22" height="97"/><rect x="581" y="575" width="22" height="137"/><rect x="612" y="639" width="22" height="73"/><rect x="644" y="553" width="22" height="159"/><rect x="675" y="652" width="22" height="60"/><rect x="706" y="532" width="22" height="180"/><rect x="737" y="634" width="22" height="78"/><rect x="769" y="566" width="22" height="146"/><rect x="800" y="498" width="22" height="214"/></g>
<rect x="208" y="697" width="614" height="8" fill="#5b7fa5" fill-opacity=".5"/>
<g fill="#5195ce"><rect x="208" y="694" width="18" height="18"/><rect x="236" y="694" width="22" height="18"/><rect x="268" y="694" width="22" height="18"/><rect x="299" y="548" width="22" height="164"/><rect x="330" y="695" width="22" height="17"/><rect x="361" y="694" width="22" height="18"/><rect x="393" y="690" width="22" height="22"/><rect x="424" y="695" width="22" height="17"/><rect x="456" y="695" width="22" height="17"/><rect x="487" y="695" width="22" height="17"/><rect x="518" y="694" width="22" height="18"/><rect x="550" y="696" width="22" height="16"/><rect x="581" y="695" width="22" height="17"/><rect x="612" y="695" width="22" height="17"/><rect x="644" y="695" width="22" height="17"/><rect x="675" y="691" width="22" height="21"/><rect x="706" y="695" width="22" height="17"/><rect x="737" y="695" width="22" height="17"/><rect x="769" y="694" width="22" height="18"/><rect x="800" y="697" width="22" height="15"/></g>
</g>
<text class="a" x="1368" y="851">400 ms</text><text class="a" x="1368" y="896">300 ms</text><text class="a" x="1368" y="941">200 ms</text><text class="a" x="1368" y="986">100 ms</text><text class="a" x="1368" y="1032">0 ns</text>
<text class="x" x="1389.500" y="1045">11:54</text><text class="x" x="1490.500" y="1045">11:56</text><text class="x" x="1590.500" y="1045">11:58</text>
<text class="y" transform="translate(1322,947) rotate(-90)">讀取（-）/寫入（+）</text>
<text class="h" x="1815" y="856">max</text><text class="h" x="1880" y="856">current</text>
<g clip-path="url(#c2)">
<rect class="st" x="1647" y="861" width="243" height="25"/><rect class="st" x="1647" y="911" width="243" height="25"/><rect class="st" x="1647" y="961" width="243" height="25"/><rect class="st" x="1647" y="1011" width="243" height="25"/>
<rect x="1657" y="874" width="13" height="4" fill="#b7dbab"/><text class="n" x="1677" y="878">sda_讀取</text><text class="r" x="1815" y="878">8 ms</text><text class="r" x="1880" y="878">400 µs</text>
<rect x="1657" y="899" width="13" height="4" fill="#f4d598"/><text class="n" x="1677" y="903">sdb_讀取</text><text class="r" x="1815" y="903">200 µs</text><text class="r" x="1880" y="903">200 µs</text>
<rect x="1657" y="924" width="13" height="4" fill="#70dbed"/><text class="n" x="1677" y="928">sdc_讀取</text><text class="r" x="1815" y="928">19 ms</text><text class="r" x="1880" y="928">2 ms</text>
<rect x="1657" y="949" width="13" height="4" fill="#f29191"/><text class="n" x="1677" y="953">dm-1_寫入</text><text class="r" x="1815" y="953">93 ms</text><text class="r" x="1880" y="953">2 ms</text>
<rect x="1657" y="974" width="13" height="4" fill="#82b5d8"/><text class="n" x="1677" y="978">dm-10_寫入</text><text class="r" x="1815" y="978">26 ms</text><text class="r" x="1880" y="978">6 ms</text>
<rect x="1657" y="999" width="13" height="4" fill="#e0752d"/><text class="n" x="1677" y="1003">dm-2_寫入</text><text class="r" x="1815" y="1003">2 ms</text><text class="r" x="1880" y="1003">0 ns</text>
<rect x="1657" y="1024" width="13" height="4" fill="#bf1b00"/><text class="n" x="1677" y="1028">dm-3_寫入</text><text class="r" x="1815" y="1028">26 ms</text><text class="r" x="1880" y="1028">5 ms</text>
<text class="n" x="1677" y="1053">dm-4_寫入</text><text class="r" x="1815" y="1053">26 ms</text><text class="r" x="1880" y="1053">6 ms</text>
</g>

<!-- network -->
<text class="t" x="521" y="1088">網路流量</text>
<g class="z" transform="translate(70,1060) scale(.5868,.3333)">
<path d="M153 254L210 251 305 247 400 250 495 237 589 227 684 237 780 251 874 239 968 244 1064 246V541H153Z" style="fill:#40322f"/>
<path d="M153 828L210 831 305 835 400 832 495 845 589 855 684 847 780 831 874 843 968 838 1064 835V541H153Z" style="fill:#3a2d30"/>
<path d="M153 506L210 499 305 525 400 421 495 523 589 527 684 525 780 522 874 526 968 530 1064 527V541H153Z" style="fill:#705da0;fill-opacity:.2"/>
<path d="M153 576L210 582 305 558 400 661 495 559 589 556 684 558 780 560 874 558 968 556 1064 555V541H153Z" style="fill:#f4d598;fill-opacity:.1"/>
</g>
<path d="M160 1112.500H716M160 1176.500H716M160 1240.500H716M160 1304.500H716M160 1369.500H716" fill="none" stroke="#fff" stroke-opacity=".18" shape-rendering="crispEdges"/>
<path d="M193.500 1112V1369M305.500 1112V1369M415.500 1112V1369M527.500 1112V1369M638.500 1112V1369" fill="none" stroke="#fff" stroke-opacity=".2" shape-rendering="crispEdges"/>
<g class="z" transform="translate(70,1060) scale(.5868,.3333)">
<polyline points="153,251 210,248 305,244 400,247 495,234 589,224 684,234 780,248 874,233 968,240 1064,243" stroke="#6a9f5c" stroke-width="2"/>
<polyline points="153,255 210,252 305,248 400,251 495,238 589,228 684,238 780,252 874,240 968,245 1064,247" stroke="#e24d42" stroke-width="2"/>
<polyline points="153,506 210,499 305,525 400,421 495,523 589,527 684,525 780,522 874,526 968,530 1064,527" stroke="#705da0" stroke-width="2"/>
<polyline points="153,579 210,585 305,561 400,664 495,562 589,559 684,561 780,563 874,561 968,559 1064,558" stroke="#1f78c1" stroke-width="2"/>
<polyline points="153,576 210,582 305,558 400,661 495,559 589,556 684,558 780,560 874,558 968,556 1064,555" stroke="#f4d598" stroke-width="2"/>
<polyline points="153,828 210,831 305,835 400,832 495,845 589,855 684,847 780,831 874,843 968,838 1064,835" stroke="#f29191" stroke-width="2"/>
<polyline points="153,536 1064,536" stroke="#447ebc" stroke-width="2"/>
<polyline points="153,541 1064,541" stroke="#eab839" stroke-width="3"/>
<polyline points="153,547 1064,547" stroke="#b9b3e0" stroke-width="2"/>
</g>
<text class="a" x="154" y="1117">10 Mbps</text><text class="a" x="154" y="1181">5 Mbps</text><text class="a" x="154" y="1245">0 bps</text><text class="a" x="154" y="1309">-5 Mbps</text><text class="a" x="154" y="1374">-10 Mbps</text>
<text class="x" x="193.500" y="1387">11:54</text><text class="x" x="305.500" y="1387">11:55</text><text class="x" x="415.500" y="1387">11:56</text><text class="x" x="527.500" y="1387">11:57</text><text class="x" x="638.500" y="1387">11:58</text>
<text class="y" transform="translate(97,1249) rotate(-90)">上傳（-）/下載（+）</text>
<text class="h" x="962" y="1122">current</text>
<g clip-path="url(#c3)">
<rect class="st" x="737" y="1127" width="235" height="25"/><rect class="st" x="737" y="1177" width="235" height="25"/><rect class="st" x="737" y="1227" width="235" height="25"/><rect class="st" x="737" y="1277" width="235" height="25"/><rect class="st" x="737" y="1327" width="235" height="25"/><rect class="st" x="737" y="1377" width="235" height="25"/>
<rect x="748" y="1140" width="13" height="4" fill="#7eb26d"/><text class="n" x="767" y="1144">enp3s0_in下載</text><text class="r" x="962" y="1144">7.66 Mbps</text>
<rect x="748" y="1165" width="13" height="4" fill="#eab839"/><text class="n" x="767" y="1169">fwbr100i0_in下載</text><text class="r" x="962" y="1169">10 kbps</text>
<rect x="748" y="1190" width="13" height="4" fill="#6ed0e0"/><text class="n" x="767" y="1194">fwbr101i0_in下載</text><text class="r" x="962" y="1194">10 kbps</text>
<rect x="748" y="1215" width="13" height="4" fill="#ef843c"/><text class="n" x="767" y="1219">fwbr200i0_in下載</text><text class="r" x="962" y="1219">10 kbps</text>
<rect x="748" y="1240" width="13" height="4" fill="#e24d42"/><text class="n" x="767" y="1244">fwln100i0_in下載</text><text class="r" x="962" y="1244">7.62 Mbps</text>
<rect x="748" y="1265" width="13" height="4" fill="#1f78c1"/><text class="n" x="767" y="1269">fwln101i0_in下載</text><text class="r" x="962" y="1269">10 kbps</text>
<rect x="748" y="1290" width="13" height="4" fill="#ba43a9"/><text class="n" x="767" y="1294">fwln200i0_in下載</text><text class="r" x="962" y="1294">10 kbps</text>
<rect x="748" y="1315" width="13" height="4" fill="#705da0"/><text class="n" x="767" y="1319">fwpr100p0_in下載</text><text class="r" x="962" y="1319">370 kbps</text>
<rect x="748" y="1340" width="13" height="4" fill="#447ebc"/><text class="n" x="767" y="1344">lo_in下載</text><text class="r" x="962" y="1344">130 kbps</text>
<rect x="748" y="1365" width="13" height="4" fill="#890f02"/><text class="n" x="767" y="1369">vmbr0_in下載</text><text class="r" x="962" y="1369">47 kbps</text>
<rect x="748" y="1390" width="13" height="4" fill="#0a437c"/><text class="n" x="767" y="1394">enp3s0_out上傳</text><text class="r" x="962" y="1394">405 kbps</text>
</g>

<!-- disk size -->
<text class="t" x="1439" y="1088">硬碟讀寫容量大小</text>
<path class="g" d="M1066 1112.500H1592M1066 1154.500H1592M1066 1197.500H1592M1066 1240.500H1592M1066 1283.500H1592M1066 1326.500H1592M1066 1369.500H1592"/>
<path class="v" d="M1097.500 1112V1369M1202.500 1112V1369M1308.500 1112V1369M1413.500 1112V1369M1518.500 1112V1369"/>
<g transform="translate(990,1060) scale(.5931,.3333)">
<g fill="#fc964e"><rect x="152" y="282" width="60" height="498"/><rect x="240" y="273" width="60" height="43"/><rect x="329" y="590" width="60" height="192"/><rect x="418" y="597" width="59" height="187"/><rect x="506" y="583" width="60" height="197"/><rect x="595" y="445" width="60" height="341"/><rect x="684" y="449" width="60" height="337"/><rect x="773" y="503" width="59" height="275"/><rect x="862" y="482" width="59" height="298"/><rect x="950" y="442" width="59" height="344"/></g>
<g fill="#5195ce"><rect x="152" y="780" width="60" height="19"/><rect x="240" y="316" width="60" height="483"/><rect x="329" y="782" width="60" height="17"/><rect x="418" y="784" width="59" height="15"/><rect x="506" y="780" width="60" height="19"/><rect x="595" y="786" width="60" height="13"/><rect x="684" y="786" width="60" height="13"/><rect x="773" y="778" width="59" height="21"/><rect x="862" y="780" width="59" height="19"/><rect x="950" y="786" width="59" height="13"/></g>
<g fill="#70dbed"><rect x="152" y="801" width="60" height="24"/><rect x="240" y="801" width="60" height="24"/><rect x="329" y="801" width="60" height="26"/><rect x="418" y="801" width="59" height="24"/><rect x="506" y="801" width="60" height="24"/><rect x="595" y="801" width="60" height="24"/><rect x="684" y="801" width="60" height="24"/><rect x="773" y="801" width="59" height="24"/><rect x="862" y="801" width="59" height="33"/><rect x="950" y="801" width="59" height="24"/></g>
</g>
<text class="a" x="1059" y="1117">5 MBs</text><text class="a" x="1059" y="1159">4 MBs</text><text class="a" x="1059" y="1202">3 MBs</text><text class="a" x="1059" y="1245">2 MBs</text><text class="a" x="1059" y="1288">1 MBs</text><text class="a" x="1059" y="1331">0 Bs</text><text class="a" x="1059" y="1374">-1 MBs</text>
<text class="x" x="1097.500" y="1387">11:54</text><text class="x" x="1202.500" y="1387">11:55</text><text class="x" x="1308.500" y="1387">11:56</text><text class="x" x="1413.500" y="1387">11:57</text><text class="x" x="1518.500" y="1387">11:58</text>
<text class="y" transform="translate(1016,1251) rotate(-90)">讀取（-）/寫入（+）</text>
<text class="h" x="1798" y="1122">max</text><text class="h" x="1880" y="1122">current</text>
<g clip-path="url(#c4)">
<rect class="st" x="1613" y="1127" width="277" height="25"/><rect class="st" x="1613" y="1177" width="277" height="25"/><rect class="st" x="1613" y="1227" width="277" height="25"/><rect class="st" x="1613" y="1277" width="277" height="25"/><rect class="st" x="1613" y="1327" width="277" height="25"/><rect class="st" x="1613" y="1377" width="277" height="25"/>
<rect x="1623.500" y="1140" width="13" height="4" fill="#6ed0e0"/><text class="n" x="1643" y="1144">dm-10_讀取</text><text class="r" x="1798" y="1144">66 kBs</text><text class="r" x="1880" y="1144">0 Bs</text>
<rect x="1623.500" y="1165" width="13" height="4" fill="#508642"/><text class="n" x="1643" y="1169">dm-2_讀取</text><text class="r" x="1798" y="1169">819 Bs</text><text class="r" x="1880" y="1169">0 Bs</text>
<rect x="1623.500" y="1190" width="13" height="4" fill="#cca300"/><text class="n" x="1643" y="1194">dm-3_讀取</text><text class="r" x="1798" y="1194">66 kBs</text><text class="r" x="1880" y="1194">0 Bs</text>
<rect x="1623.500" y="1215" width="13" height="4" fill="#447ebc"/><text class="n" x="1643" y="1219">dm-4_讀取</text><text class="r" x="1798" y="1219">66 kBs</text><text class="r" x="1880" y="1219">0 Bs</text>
<rect x="1623.500" y="1240" width="13" height="4" fill="#b7dbab"/><text class="n" x="1643" y="1244">sda_讀取</text><text class="r" x="1798" y="1244">105 kBs</text><text class="r" x="1880" y="1244">105 kBs</text>
<rect x="1623.500" y="1265" width="13" height="4" fill="#f4d598"/><text class="n" x="1643" y="1269">sdb_讀取</text><text class="r" x="1798" y="1269">52 kBs</text><text class="r" x="1880" y="1269">52 kBs</text>
<rect x="1623.500" y="1290" width="13" height="4" fill="#70dbed"/><text class="n" x="1643" y="1294">sdc_讀取</text><text class="r" x="1798" y="1294">276 kBs</text><text class="r" x="1880" y="1294">210 kBs</text>
<rect x="1623.500" y="1315" width="13" height="4" fill="#f29191"/><text class="n" x="1643" y="1319">dm-1_寫入</text><text class="r" x="1798" y="1319">3.408 MBs</text><text class="r" x="1880" y="1319">35 kBs</text>
<rect x="1623.500" y="1340" width="13" height="4" fill="#82b5d8"/><text class="n" x="1643" y="1344">dm-10_寫入</text><text class="r" x="1798" y="1344">363 kBs</text><text class="r" x="1880" y="1344">70 kBs</text>
<rect x="1623.500" y="1365" width="13" height="4" fill="#e0752d"/><text class="n" x="1643" y="1369">dm-2_寫入</text><text class="r" x="1798" y="1369">9 kBs</text><text class="r" x="1880" y="1369">0 Bs</text>
<rect x="1623.500" y="1390" width="13" height="4" fill="#bf1b00"/><text class="n" x="1643" y="1394">dm-3_寫入</text><text class="r" x="1798" y="1394">365 kBs</text><text class="r" x="1880" y="1394">70 kBs</text>
</g>

<!-- TCP -->
<text class="t" x="521" y="1429">TCP 連接情況</text>
<path class="g" d="M111 1454.500H730M111 1518.500H730M111 1582.500H730M111 1646.500H730M111 1711.500H730"/>
<path class="v" d="M147.500 1454V1711M271.500 1454V1711M396.500 1454V1711M519.500 1454V1711M643.500 1454V1711"/>
<g class="z" transform="translate(70,1400) scale(.5868,.3333)">
<polyline points="70,688 132,595 185,474 238,438 290,404 343,416 396,470 449,446 501,488 555,554 607,547 660,427 712,374 766,335 818,377 871,478 924,558 976,578 1029,563 1082,670" stroke="#eab839" stroke-width="1.300"/>
<polyline points="70,720 80,716 185,716 238,729 290,716 343,721 396,721 449,725 501,729 555,716 607,729 660,733 712,729 766,729 818,729 871,721 924,729 976,725 1029,729 1082,729" stroke="#e24d42" stroke-width="1.300"/>
<polyline points="70,802 80,799 185,799 238,811 290,799 343,802 396,802 449,806 501,811 555,799 607,811 660,815 712,811 766,811 818,811 871,802 924,811 976,806 1029,811 1082,811" stroke="#7eb26d" stroke-width="1.300"/>
<polyline points="70,801 80,798 185,798 238,810 290,798 343,801 396,801 449,805 501,810 555,798 607,810 660,814 712,810 766,810 818,810 871,801 924,810 976,805 1029,810 1082,810" stroke="#1f78c1" stroke-width="1.300"/>
<polyline points="70,920 132,931 185,923 238,931 290,921 343,931 396,921 449,931 501,925 555,931 607,925 660,931 712,919 766,931 818,923 871,915 924,931 976,920 1029,931 1082,931" stroke="#6ed0e0" stroke-width="1.300"/>
<polyline points="70,912 80,910 132,923 185,919 238,931 290,915 343,927 396,917 449,931 501,923 555,927 607,923 660,931 712,915 766,931 818,919 871,908 924,931 976,916 1029,931 1082,931" stroke="#ef843c" stroke-width="1.300"/>
</g>
<text class="a" x="106" y="1459">200</text><text class="a" x="106" y="1523">150</text><text class="a" x="106" y="1587">100</text><text class="a" x="106" y="1651">50</text><text class="a" x="106" y="1716">0</text>
<text class="x" x="147.500" y="1729">11:54</text><text class="x" x="271.500" y="1729">11:55</text><text class="x" x="396.500" y="1729">11:56</text><text class="x" x="519.500" y="1729">11:57</text><text class="x" x="643.500" y="1729">11:58</text>
<text class="h" x="913" y="1464">max</text><text class="h" x="962" y="1464">current</text>
<rect class="st" x="751" y="1469" width="221" height="25"/><rect class="st" x="751" y="1519" width="221" height="25"/><rect class="st" x="751" y="1569" width="221" height="25"/>
<rect x="762" y="1482" width="12" height="4" fill="#7eb26d"/><text class="n" x="781" y="1486">ESTABLISHED</text><text class="r" x="913" y="1486">35</text><text class="r" x="962" y="1486">32</text>
<rect x="762" y="1507" width="12" height="4" fill="#eab839"/><text class="n" x="781" y="1511">TCP_tw</text><text class="r" x="913" y="1511">155</text><text class="r" x="962" y="1511">68</text>
<rect x="762" y="1532" width="12" height="4" fill="#6ed0e0"/><text class="n" x="781" y="1536">ActiveOpens</text><text class="r" x="913" y="1536">5</text><text class="r" x="962" y="1536">1</text>
<rect x="762" y="1557" width="12" height="4" fill="#ef843c"/><text class="n" x="781" y="1561">PassiveOpens</text><text class="r" x="913" y="1561">6</text><text class="r" x="962" y="1561">1</text>
<rect x="762" y="1582" width="12" height="4" fill="#e24d42"/><text class="n" x="781" y="1586">TCP_alloc</text><text class="r" x="913" y="1586">56</text><text class="r" x="962" y="1586">53</text>
<rect x="762" y="1607" width="12" height="4" fill="#1f78c1"/><text class="n" x="781" y="1611">TCP_inuse</text><text class="r" x="913" y="1611">35</text><text class="r" x="962" y="1611">32</text>

<!-- temp -->
<text class="t" x="1439.500" y="1429">硬體溫度</text>
<path class="g" d="M1037 1454.500H1423.500M1037 1505.500H1423.500M1037 1556.500H1423.500M1037 1608.500H1423.500M1037 1659.500H1423.500M1037 1711.500H1423.500"/>
<path class="v" d="M1059.500 1454V1711M1138.500 1454V1711M1214.500 1454V1711M1292.500 1454V1711M1369.500 1454V1711"/>
<g class="z" transform="translate(990,1400) scale(.5931,.3333)">
<polyline points="79,285 705,285" stroke="#6f9a5e" stroke-width="1.500"/>
<polyline points="79,784 705,784" stroke="#508642" stroke-width="1.500"/>
<polyline points="79,846 705,846" stroke="#8a4fa8" stroke-width="2"/>
<polyline points="79,475 85,469 117,469 150,500 183,469 216,500 249,469 281,438 314,469 347,438 378,438 411,469 444,469 477,469 510,469 543,438 575,469 608,438 640,469 673,438 705,469" stroke="#1f78c1" stroke-width="1.200"/>
<polyline points="79,469 117,500 150,469 183,438 216,469 249,469 281,469 314,438 347,438 378,469 411,469 444,408 477,469 510,469 543,469 575,438 608,469 640,469 673,500 705,500" stroke="#ef843c" stroke-width="1.200"/>
<polyline points="79,414 85,408 117,500 150,500 183,438 216,377 249,469 281,438 314,408 347,500 378,438 411,408 444,500 477,377 510,408 543,438 575,438 608,438 640,408 673,438 705,408" stroke="#e24d42" stroke-width="1.200"/>
<polyline points="79,403 85,408 117,377 150,408 183,347 216,377 249,377 281,408 314,377 347,408 378,377 411,408 444,316 477,377 510,408 543,408 575,377 608,377 640,408 673,408 705,408" stroke="#eab839" stroke-width="1.200"/>
<polyline points="79,403 85,408 117,377 150,408 183,347 216,408 249,377 281,408 314,377 347,408 378,377 411,408 444,316 477,408 510,408 543,408 575,377 608,408 640,408 673,408 705,408" stroke="#8fd0c5" stroke-width="1.200"/>
</g>
<text class="a" x="1032" y="1459">50 °C</text><text class="a" x="1032" y="1510">45 °C</text><text class="a" x="1032" y="1561">40 °C</text><text class="a" x="1032" y="1613">35 °C</text><text class="a" x="1032" y="1664">30 °C</text><text class="a" x="1032" y="1716">25 °C</text>
<text class="x" x="1059.500" y="1729">11:54</text><text class="x" x="1138" y="1729">11:55</text><text class="x" x="1214.500" y="1729">11:56</text><text class="x" x="1292.500" y="1729">11:57</text><text class="x" x="1369.500" y="1729">11:58</text>
<text class="h" x="1740" y="1464">max</text><text class="h" x="1810" y="1464">avg</text><text class="h" x="1880" y="1464">current</text>
<rect class="st" x="1445" y="1469" width="445" height="25"/><rect class="st" x="1445" y="1519" width="445" height="25"/><rect class="st" x="1445" y="1569" width="445" height="25"/><rect class="st" x="1445" y="1619" width="445" height="25"/><rect class="st" x="1445" y="1669" width="445" height="25"/>
<rect x="1455.500" y="1482" width="13" height="4" fill="#7eb26d"/><text class="n" x="1474.500" y="1486">0000:00:01_0_0000:01:00_0 temp1</text><text class="r" x="1740" y="1486">46.00 °C</text><text class="r" x="1810" y="1486">46.00 °C</text><text class="r" x="1880" y="1486">46.00 °C</text>
<rect x="1455.500" y="1507" width="13" height="4" fill="#eab839"/><text class="n" x="1474.500" y="1511">platform_coretemp_0 temp1</text><text class="r" x="1740" y="1511">45.00 °C</text><text class="r" x="1810" y="1511">42.67 °C</text><text class="r" x="1880" y="1511">42.00 °C</text>
<rect x="1455.500" y="1532" width="13" height="4" fill="#6ed0e0"/><text class="n" x="1474.500" y="1536">platform_coretemp_0 temp2</text><text class="r" x="1740" y="1536">45.00 °C</text><text class="r" x="1810" y="1536">42.52 °C</text><text class="r" x="1880" y="1536">42.00 °C</text>
<rect x="1455.500" y="1557" width="13" height="4" fill="#ef843c"/><text class="n" x="1474.500" y="1561">platform_coretemp_0 temp3</text><text class="r" x="1740" y="1561">42.00 °C</text><text class="r" x="1810" y="1561">40.19 °C</text><text class="r" x="1880" y="1561">39.00 °C</text>
<rect x="1455.500" y="1582" width="13" height="4" fill="#e24d42"/><text class="n" x="1474.500" y="1586">platform_coretemp_0 temp4</text><text class="r" x="1740" y="1586">43.00 °C</text><text class="r" x="1810" y="1586">41.05 °C</text><text class="r" x="1880" y="1586">42.00 °C</text>
<rect x="1455.500" y="1607" width="13" height="4" fill="#1f78c1"/><text class="n" x="1474.500" y="1611">platform_coretemp_0 temp5</text><text class="r" x="1740" y="1611">41.00 °C</text><text class="r" x="1810" y="1611">40.14 °C</text><text class="r" x="1880" y="1611">40.00 °C</text>
<rect x="1455.500" y="1632" width="13" height="4" fill="#ba43a9"/><text class="n" x="1474.500" y="1636">thermal_thermal_zone0 temp0</text><text class="r" x="1740" y="1636">27.80 °C</text><text class="r" x="1810" y="1636">27.80 °C</text><text class="r" x="1880" y="1636">27.80 °C</text>
<rect x="1455.500" y="1657" width="13" height="4" fill="#705da0"/><text class="n" x="1474.500" y="1661">thermal_thermal_zone0 temp1</text><text class="r" x="1740" y="1661">27.80 °C</text><text class="r" x="1810" y="1661">27.80 °C</text><text class="r" x="1880" y="1661">27.80 °C</text>
<rect x="1455.500" y="1682" width="13" height="4" fill="#508642"/><text class="n" x="1474.500" y="1686">thermal_thermal_zone0 temp2</text><text class="r" x="1740" y="1686">29.80 °C</text><text class="r" x="1810" y="1686">29.80 °C</text><text class="r" x="1880" y="1686">29.80 °C</text>
</svg>
</body></html>
